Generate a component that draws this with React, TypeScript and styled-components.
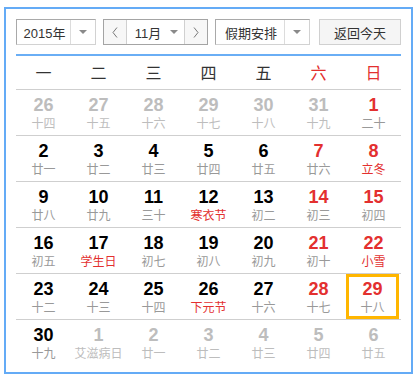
import styled, { createGlobalStyle } from "styled-components";

const GlobalStyle = createGlobalStyle`
  body {
    margin: 0;
    background: #fff;
    font-family: "Liberation Sans", "Noto Sans CJK SC", sans-serif;
  }
`;

const Frame = styled.div`
  box-sizing: border-box;
  width: 409px;
  height: 367px;
  margin: 7px 0 0 4px;
  padding: 10px;
  border: 2px solid #64abf6;
  background: #fff;
`;

const Toolbar = styled.div`
  display: flex;
  align-items: stretch;
  gap: 7px;
  height: 26px;
  margin-bottom: 9px;
  font-family: "Liberation Sans", "Noto Sans CJK SC", sans-serif;
  font-size: 13px;
  color: #333;
`;

const Select = styled.div<{ $width: number }>`
  box-sizing: border-box;
  display: flex;
  width: ${(p) => p.$width}px;
  border: 1px solid;
  border-color: #a9a9a9 #d2d2d2 #d2d2d2 #a9a9a9;
  background: #fff;
`;

const SelectText = styled.div`
  flex: 1;
  display: flex;
  align-items: center;
  justify-content: center;
  padding-left: 2px;
`;

const SelectArrow = styled.div`
  width: 24px;
  display: flex;
  align-items: center;
  justify-content: center;
  border-left: 1px solid #dcdcdc;
`;

const Caret = styled.span`
  width: 0;
  height: 0;
  border-left: 4px solid transparent;
  border-right: 4px solid transparent;
  border-top: 4px solid #8a8a8a;
`;

const MonthBox = styled.div`
  box-sizing: border-box;
  display: flex;
  width: 105px;
  border: 1px solid #a4a4a4;
  background: #fff;
`;

const Step = styled.div<{ $side: "left" | "right" }>`
  width: 22px;
  display: flex;
  align-items: center;
  justify-content: center;
  background: #f7f7f7;
  ${(p) => (p.$side === "left" ? "border-right" : "border-left")}: 1px solid #d0d0d0;
`;

const MonthText = styled.div`
  flex: 1;
  display: flex;
  align-items: center;
  justify-content: center;
  gap: 9px;
  padding-left: 2px;
`;

const TodayButton = styled.button`
  box-sizing: border-box;
  width: 82px;
  margin-left: auto;
  padding: 0;
  border: 1px solid #d0d0d0;
  background: #f5f5f5;
  font: inherit;
  color: #333;
`;

const WeekHead = styled.div`
  box-sizing: border-box;
  display: grid;
  grid-template-columns: repeat(7, 1fr);
  height: 36px;
  border-top: 2px solid #6aaef5;
  border-bottom: 1px solid #cfcfcf;
  font-family: "Noto Sans CJK SC", sans-serif;
  font-size: 16px;
  line-height: 33px;
  text-align: center;
`;

const WeekName = styled.div<{ $weekend?: boolean }>`
  color: ${(p) => (p.$weekend ? "#e3302f" : "#333")};
`;

const Week = styled.div`
  box-sizing: border-box;
  display: grid;
  grid-template-columns: repeat(7, 1fr);
  height: 46px;
  border-bottom: 1px solid #cfcfcf;
  &:last-child {
    border-bottom: none;
  }
`;

const Day = styled.div<{ $today?: boolean }>`
  box-sizing: border-box;
  text-align: center;
  padding-top: ${(p) => (p.$today ? 2 : 5)}px;
  ${(p) => p.$today && "border: 3px solid #ffb600; margin-right: 2px;"}
`;

const Num = styled.div<{ $tone: "normal" | "red" | "other" }>`
  font-family: "Liberation Sans", Arial, sans-serif;
  font-weight: bold;
  font-size: 18px;
  line-height: 20px;
  color: ${(p) => (p.$tone === "red" ? "#e3302f" : p.$tone === "other" ? "#bdbdbd" : "#000")};
`;

const Lunar = styled.div<{ $tone: "normal" | "red" | "other" }>`
  margin-top: 1px;
  font-family: "Noto Sans CJK SC", sans-serif;
  font-size: 12px;
  line-height: 14px;
  color: ${(p) => (p.$tone === "red" ? "#e3302f" : p.$tone === "other" ? "#bdbdbd" : "#999")};
`;

function Chevron({ dir }: { dir: "left" | "right" }) {
  return (
    <svg width="6" height="11" viewBox="0 0 6 11">
      <polyline
        points={dir === "left" ? "5,0.5 1,5.5 5,10.5" : "1,0.5 5,5.5 1,10.5"}
        fill="none"
        stroke="#777"
        strokeWidth="1"
      />
    </svg>
  );
}

type Cell = { d: number; l: string; other?: boolean; fest?: boolean; today?: boolean };

const weeks: Cell[][] = [
  [
    { d: 26, l: "十四", other: true },
    { d: 27, l: "十五", other: true },
    { d: 28, l: "十六", other: true },
    { d: 29, l: "十七", other: true },
    { d: 30, l: "十八", other: true },
    { d: 31, l: "十九", other: true },
    { d: 1, l: "二十" },
  ],
  [
    { d: 2, l: "廿一" },
    { d: 3, l: "廿二" },
    { d: 4, l: "廿三" },
    { d: 5, l: "廿四" },
    { d: 6, l: "廿五" },
    { d: 7, l: "廿六" },
    { d: 8, l: "立冬", fest: true },
  ],
  [
    { d: 9, l: "廿八" },
    { d: 10, l: "廿九" },
    { d: 11, l: "三十" },
    { d: 12, l: "寒衣节", fest: true },
    { d: 13, l: "初二" },
    { d: 14, l: "初三" },
    { d: 15, l: "初四" },
  ],
  [
    { d: 16, l: "初五" },
    { d: 17, l: "学生日", fest: true },
    { d: 18, l: "初七" },
    { d: 19, l: "初八" },
    { d: 20, l: "初九" },
    { d: 21, l: "初十" },
    { d: 22, l: "小雪", fest: true },
  ],
  [
    { d: 23, l: "十二" },
    { d: 24, l: "十三" },
    { d: 25, l: "十四" },
    { d: 26, l: "下元节", fest: true },
    { d: 27, l: "十六" },
    { d: 28, l: "十七" },
    { d: 29, l: "十八", today: true },
  ],
  [
    { d: 30, l: "十九" },
    { d: 1, l: "艾滋病日", other: true },
    { d: 2, l: "廿一", other: true },
    { d: 3, l: "廿二", other: true },
    { d: 4, l: "廿三", other: true },
    { d: 5, l: "廿四", other: true },
    { d: 6, l: "廿五", other: true },
  ],
];

const names = ["一", "二", "三", "四", "五", "六", "日"];

export default function App() {
  return (
    <>
      <GlobalStyle />
      <Frame>
        <Toolbar>
          <Select $width={80}>
            <SelectText>2015年</SelectText>
            <SelectArrow>
              <Caret />
            </SelectArrow>
          </Select>
          <MonthBox>
            <Step $side="left">
              <Chevron dir="left" />
            </Step>
            <MonthText>
              11月
              <Caret />
            </MonthText>
            <Step $side="right">
              <Chevron dir="right" />
            </Step>
          </MonthBox>
          <Select $width={95}>
            <SelectText>假期安排</SelectText>
            <SelectArrow>
              <Caret />
            </SelectArrow>
          </Select>
          <TodayButton>返回今天</TodayButton>
        </Toolbar>

        <WeekHead>
          {names.map((n, i) => (
            <WeekName key={n} $weekend={i >= 5}>
              {n}
            </WeekName>
          ))}
        </WeekHead>

        {weeks.map((week, wi) => (
          <Week key={wi}>
            {week.map((c, i) => {
              const numTone = c.other ? "other" : i >= 5 ? "red" : "normal";
              const lunarTone = c.other ? "other" : c.fest ? "red" : "normal";
              return (
                <Day key={i} $today={c.today}>
                  <Num $tone={numTone}>{c.d}</Num>
                  <Lunar $tone={lunarTone}>{c.l}</Lunar>
                </Day>
              );
            })}
          </Week>
        ))}
      </Frame>
    </>
  );
}
